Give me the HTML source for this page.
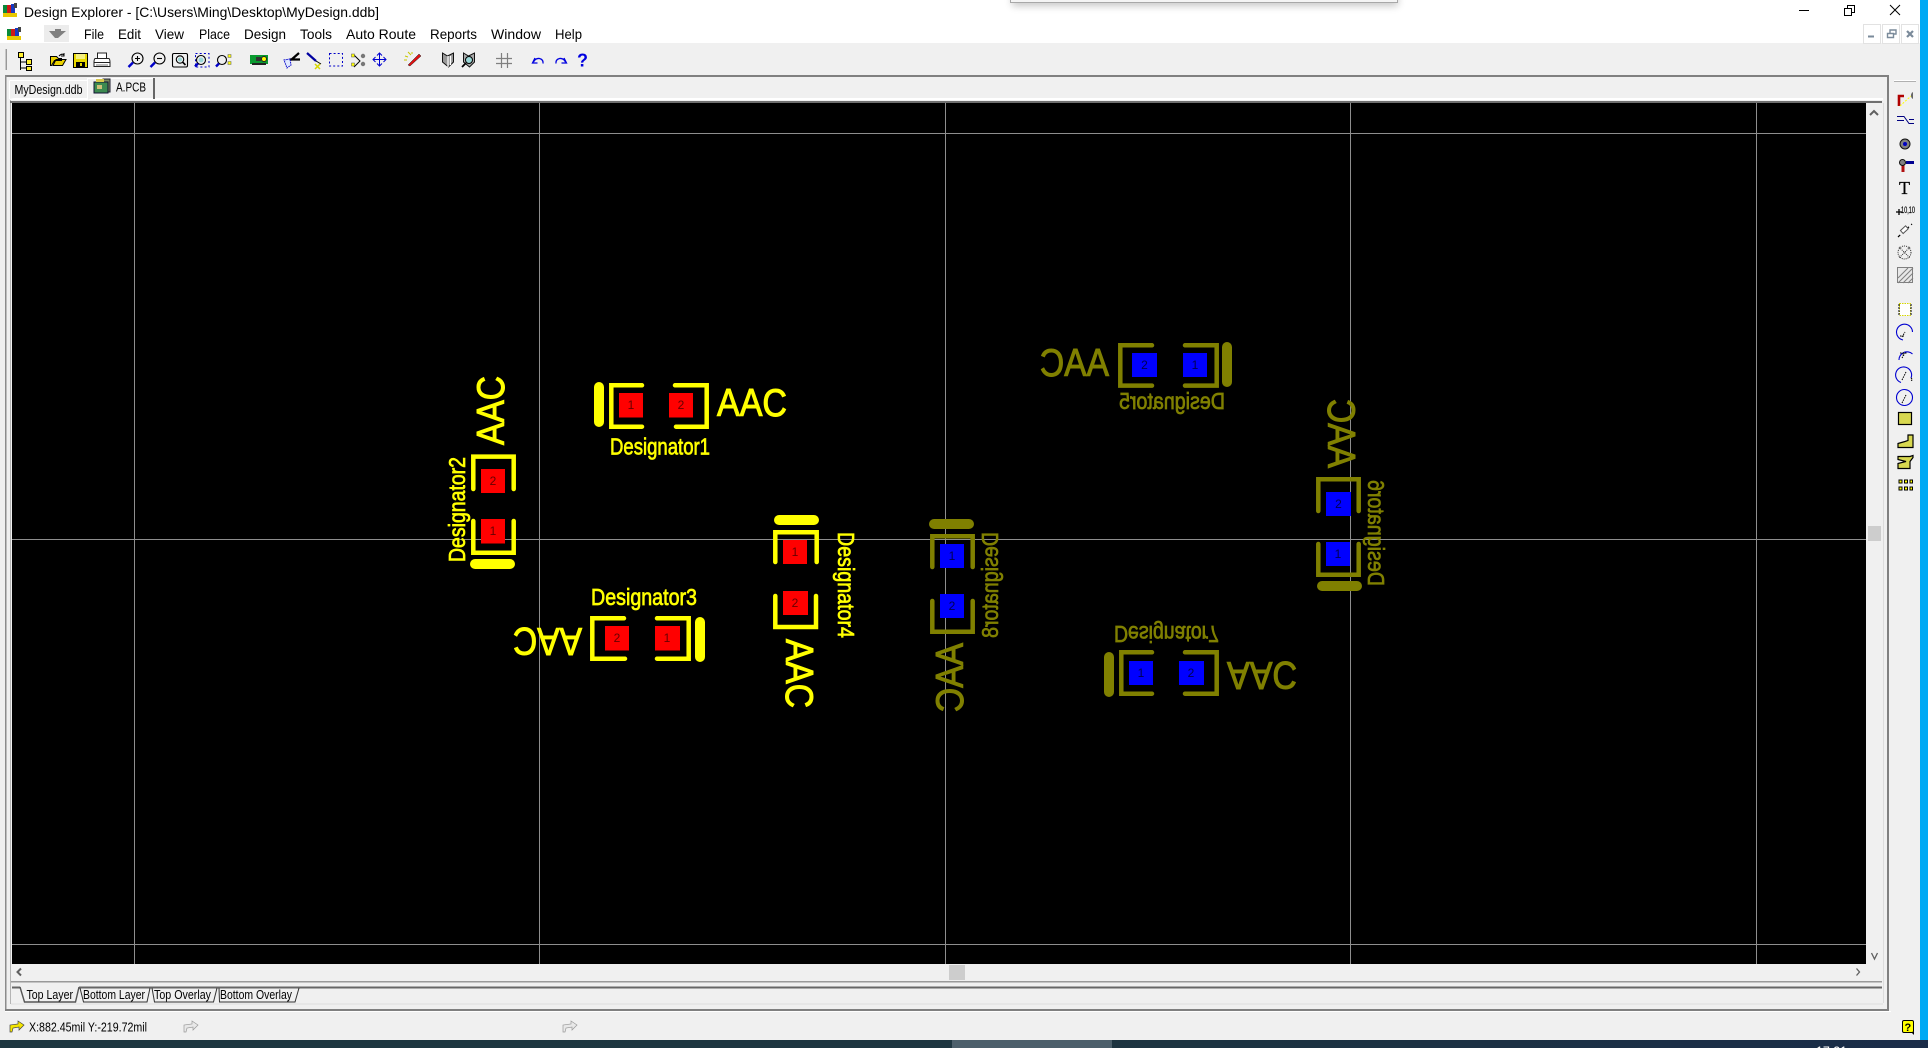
<!DOCTYPE html>
<html><head><meta charset="utf-8"><title>Design Explorer</title>
<style>
html,body{margin:0;padding:0;width:1928px;height:1048px;overflow:hidden;background:#f0f0f0}
svg{display:block;position:absolute;left:0;top:0}
text{font-family:"Liberation Sans",sans-serif}
.ui{font-size:14px;fill:#000}
.s{font-size:12.5px;fill:#000}
.ac{font-size:39px;stroke-width:1}
.de{font-size:23px;stroke-width:.7}
.y{fill:#ff0;stroke:#ff0}
.o{fill:#808000;stroke:#808000}
.p{font-size:12px;text-anchor:middle}
.by path{fill:none;stroke:#ff0;stroke-width:4.5;stroke-linecap:round;stroke-linejoin:miter}
.bo path{fill:none;stroke:#808000;stroke-width:4.5;stroke-linecap:round;stroke-linejoin:miter}
</style></head><body>
<svg width="1928" height="1048" viewBox="0 0 1928 1048">
<defs><filter id="sh" x="-5%" y="-50%" width="110%" height="300%"><feGaussianBlur stdDeviation="4"/></filter></defs>
<rect width="1928" height="1048" fill="#f0f0f0"/>
<!-- title + menu white -->
<rect width="1920" height="43" fill="#fff"/>
<rect x="1012" y="-20" width="386" height="26" fill="#000" opacity=".22" filter="url(#sh)"/>
<rect x="1010.5" y="-4" width="387" height="6.5" fill="#f4f4f4" stroke="#a8a8a8"/>
<!-- app icon -->
<g id="t"><rect x="3" y="5" width="4" height="11" fill="#0a8a3a"/><rect x="7" y="5" width="4" height="11" fill="#d01818"/><rect x="11" y="4" width="4" height="12" fill="#1838c0"/><rect x="3" y="13" width="14" height="4" fill="#e8c800"/><rect x="14" y="3" width="3" height="5" fill="#444"/></g>
<text class="ui" x="24" y="17" textLength="355" lengthAdjust="spacingAndGlyphs">Design Explorer - [C:\Users\Ming\Desktop\MyDesign.ddb]</text>
<!-- window controls -->
<path d="M1799 10.5H1809" stroke="#000" fill="none"/>
<path d="M1844.5 8.5h7v7h-7zM1847.5 8.5v-3h7v7h-3" stroke="#000" fill="none"/>
<path d="M1890 5l10 10M1900 5l-10 10" stroke="#000" fill="none"/>
<!-- menu -->
<g><rect x="7" y="29" width="4" height="9" fill="#0a8a3a"/><rect x="11" y="29" width="4" height="9" fill="#d01818"/><rect x="15" y="28" width="4" height="10" fill="#1838c0"/><rect x="7" y="36" width="14" height="4" fill="#e8c800"/><rect x="18" y="27" width="3" height="5" fill="#444"/></g>
<rect x="44" y="25" width="25" height="17" fill="#ececec"/>
<path d="M49 31h6v-2h6v2h5l-8 7h-3z" fill="#808080"/>
<g class="ui">
<text x="84" y="39" textLength="20" lengthAdjust="spacingAndGlyphs">File</text>
<text x="118" y="39" textLength="23" lengthAdjust="spacingAndGlyphs">Edit</text>
<text x="155" y="39" textLength="29" lengthAdjust="spacingAndGlyphs">View</text>
<text x="199" y="39" textLength="31" lengthAdjust="spacingAndGlyphs">Place</text>
<text x="244" y="39" textLength="42" lengthAdjust="spacingAndGlyphs">Design</text>
<text x="300" y="39" textLength="32" lengthAdjust="spacingAndGlyphs">Tools</text>
<text x="346" y="39" textLength="70" lengthAdjust="spacingAndGlyphs">Auto Route</text>
<text x="430" y="39" textLength="47" lengthAdjust="spacingAndGlyphs">Reports</text>
<text x="491" y="39" textLength="50" lengthAdjust="spacingAndGlyphs">Window</text>
<text x="555" y="39" textLength="27" lengthAdjust="spacingAndGlyphs">Help</text>
</g>
<!-- mdi buttons -->
<g fill="#fff" stroke="#e2e2e2"><rect x="1863.5" y="24.5" width="17" height="19"/><rect x="1882.5" y="24.5" width="17" height="19"/><rect x="1901.5" y="24.5" width="17" height="19"/></g>
<path d="M1868 36.5h6" stroke="#7a8a9a" stroke-width="2"/>
<path d="M1887.5 33.5h6v4h-6zM1890 33v-3h6v4h-2" stroke="#7a8a9a" fill="none" stroke-width="1.4"/>
<path d="M1907 31l6 6M1913 31l-6 6" stroke="#7a8a9a" stroke-width="2.2"/>
<!-- blue strip -->
<rect x="1920" width="8" height="1040" fill="#00a9f4"/>
<!-- toolbar icons -->
<path d="M5.500 49v21" stroke="#c8c8c8"/><path d="M6.500 49v21" stroke="#999"/>
<path d="M20.500 56v14M20.500 62H27M20.500 68H27" stroke="#000" fill="none"/>
<g fill="#ffef30" stroke="#000"><rect x="18.500" y="52.500" width="5" height="5"/><rect x="26.500" y="59.500" width="5" height="5"/><rect x="26.500" y="66.500" width="5" height="4"/></g>
<path d="M50.500 65.500V56.500h6l2 2h3v2h-7l-3 5zM53 65.500l3-6h10l-3.500 6z" fill="#e8d000" stroke="#000"/><path d="M59 56q3-3 5-1M64 53v3h-3" stroke="#000" fill="none"/>
<rect x="73.500" y="53.500" width="14" height="14" fill="#e8d800" stroke="#000"/><rect x="76" y="54" width="9" height="5" fill="#f4ef80"/><rect x="76" y="62" width="9" height="5.500" fill="#000"/><rect x="80" y="63" width="2" height="3" fill="#e8d800"/>
<path d="M97.500 58v-5h9v5M95 58.500q-1 1-1 4v4h16v-4q0-3-1-4zM94.500 62.500h15" fill="#fff" stroke="#222"/><path d="M96 65h12" stroke="#777"/>
<!-- zooms -->
<g fill="none" stroke="#000" stroke-width="1.1"><circle cx="137.500" cy="58.500" r="5.500"/><path d="M135 58.500h5M137.500 56v5"/><circle cx="159.500" cy="58.500" r="5.500"/><path d="M157 58.500h5"/><rect x="172.500" y="53.500" width="15" height="13.500" rx="1.500"/><circle cx="180" cy="59.500" r="3.700"/><circle cx="201" cy="60" r="4.500"/><circle cx="222" cy="60" r="4.500"/></g>
<path d="M133 62.500l-4.500 4.500M155 62.500l-4.500 4.500M198 63.500l-3 3M219 63.500l-3 3" stroke="#0000c8" stroke-width="2.400"/>
<path d="M182.500 62l3 3" stroke="#000" stroke-width="1.600"/>
<rect x="195.500" y="53.500" width="13.500" height="13.500" fill="none" stroke="#0000c8" stroke-dasharray="2 2.200"/>
<circle cx="201" cy="60" r="2.500" fill="#9cd8d8"/><circle cx="180" cy="59.500" r="2" fill="#9cd8d8"/>
<path d="M228 54.500h3v3h-3zM228 61.500h3v3h-3z" fill="#ff0" stroke="#666" stroke-width=".6"/>
<!-- pcb icon -->
<rect x="250" y="55" width="18" height="9" fill="#0a9a30"/><rect x="256" y="57" width="5" height="4" fill="#333"/><circle cx="264" cy="59" r="2.500" fill="#ff0" stroke="#222"/><rect x="252" y="63" width="14" height="2" fill="#222"/>
<!-- scissors etc -->
<path d="M291 60L299 53M290 59.500H300" stroke="#000" stroke-width="2.200" fill="none"/>
<path d="M284 60l6-1 1 6-4 3z" fill="#dfe8ff" stroke="#0000c8" stroke-dasharray="1.500 .8"/>
<path d="M307 53l9 8" stroke="#0000a0" stroke-width="2.200"/><path d="M316 61l5 3" stroke="#000"/><path d="M315 64l5 5M320 64l-5 5" stroke="#d8d800" stroke-width="1.500"/>
<rect x="329.500" y="53.500" width="13" height="12.500" fill="none" stroke="#0000c8" stroke-dasharray="2 2.100"/>
<path d="M354 55l6 6-6 6" stroke="#000" fill="none"/><circle cx="363" cy="56" r="2.200" fill="#777"/><circle cx="363" cy="64" r="2.200" fill="#777"/><rect x="351.500" y="54" width="3" height="3" fill="#ff0" stroke="#555" stroke-width=".5"/><rect x="351.500" y="63" width="3" height="3" fill="#ff0" stroke="#555" stroke-width=".5"/>
<path d="M379.500 53v13M373 59.500h13M377 55.500l2.500-2.500 2.500 2.500M377 63.500l2.500 2.500 2.500-2.500M375.500 57l-2.500 2.500 2.500 2.500M383.500 57l2.500 2.500-2.500 2.500" stroke="#0000d0" fill="none" stroke-width="1"/>
<path d="M408 65l11-11 2 2-11 10z" fill="#e01010" stroke="#222" stroke-width=".5"/><path d="M408 52l3 3M412 52v2M405 56l3 1M404 60h3" stroke="#c8c800"/>
<!-- books -->
<path d="M442.500 53l5 3 6-3v9l-5 5-6-5z" fill="#999" stroke="#111"/><path d="M448 56v11M450.500 56v9" stroke="#fff" stroke-width="1.200"/>
<path d="M463.500 53l5 3 6-3v9l-5 5-6-5z" fill="#aaa" stroke="#111"/><circle cx="469" cy="60" r="3.500" fill="#9cd8d8" stroke="#000"/><path d="M466 63l-4 4" stroke="#000" stroke-width="1.800"/>
<!-- grid -->
<path d="M501.500 53v15M507.500 53v15M496 58.500h16M496 63.500h16" stroke="#808080" stroke-width="1.200" fill="none"/>
<!-- undo redo -->
<path d="M535 58l-2.500 5h5M533.500 62q2-4 6-3.500 4 1 3.500 5" stroke="#0000e0" stroke-width="1.300" fill="none"/>
<path d="M564 58l2.500 5h-5M565.500 62q-2-4-6-3.500-4 1-3.500 5" stroke="#0000e0" stroke-width="1.300" fill="none"/>
<text x="577" y="66.500" font-size="18" font-weight="700" fill="#0000e0">?</text>

<!-- frame -->
<rect x="5" y="75" width="1883" height="2" fill="#808080"/>
<rect x="5" y="75" width="1.500" height="936" fill="#8c8c8c"/>
<rect x="10" y="100" width="1" height="904" fill="#b4b4b4"/>
<rect x="1887" y="75" width="2" height="936" fill="#808080"/>
<rect x="5" y="1009" width="1884" height="2" fill="#808080"/>
<rect x="5" y="1011" width="1886" height="1" fill="#fff"/>
<rect x="1883" y="103" width="1" height="900" fill="#dcdcdc"/>
<rect x="10" y="98" width="1873" height="2" fill="#fff"/>
<rect x="10" y="101" width="1872" height="2" fill="#707070"/>
<!-- doc tabs -->
<path d="M9.500 99V81.500q0-1 1-1H87" fill="#f0f0f0" stroke="#fff"/>
<text class="s" x="14.500" y="94" style="font-size:13px" textLength="68" lengthAdjust="spacingAndGlyphs">MyDesign.ddb</text>
<path d="M87.500 100V78.500H153" fill="#f0f0f0" stroke="#fff"/>
<rect x="153" y="78" width="2" height="21" fill="#666"/>
<path d="M103 79h7v13h-7z" fill="#7d8b60" stroke="#223"/><rect x="94" y="82" width="14" height="11" fill="#3c8a50" stroke="#113"/><rect x="97" y="85" width="5" height="4" fill="#cfc27a"/><rect x="96" y="79" width="8" height="3" fill="#d8c84c"/>
<text class="s" x="116" y="91.500" style="font-size:13px" textLength="30" lengthAdjust="spacingAndGlyphs">A.PCB</text>

<!-- canvas -->
<rect x="12" y="103" width="1854" height="861" fill="#000"/>
<g stroke="#8e8e8e" stroke-width="1" fill="none">
<path d="M134.500 103V964M539.500 103V964M945.500 103V964M1350.500 103V964M1756.500 103V964"/>
<path d="M12 133.500H1866M12 539.500H1866M12 944.500H1866"/>
</g>

<!-- Comp 1 -->
<g class="by"><path d="M642 385.300H611.300V426.700H642"/><path d="M675 385.300H706.700V426.700H676"/></g>
<rect x="594" y="382" width="10" height="45" rx="5" fill="#ff0"/>
<rect x="619" y="393" width="24" height="24.500" fill="#f00"/><rect x="669" y="393" width="24" height="24.500" fill="#f00"/>
<text class="p" x="631" y="409" fill="#600">1</text><text class="p" x="681" y="409" fill="#600">2</text>
<text class="ac y" transform="translate(717,416)" textLength="70" lengthAdjust="spacingAndGlyphs">AAC</text>
<text class="de y" transform="translate(610,454.500)" textLength="100" lengthAdjust="spacingAndGlyphs">Designator1</text>

<!-- Comp 2 -->
<g class="by"><path d="M473.300 489V456.600H513.700V489"/><path d="M473.300 521V552.800H513.700V521"/></g>
<rect x="470" y="559" width="45" height="10" rx="5" fill="#ff0"/>
<rect x="481" y="469" width="24" height="24" fill="#f00"/><rect x="481" y="519" width="24" height="24.500" fill="#f00"/>
<text class="p" x="493" y="485" fill="#600">2</text><text class="p" x="493" y="535" fill="#600">1</text>
<text class="ac y" transform="translate(504,445) rotate(-90)" textLength="69" lengthAdjust="spacingAndGlyphs">AAC</text>
<text class="de y" transform="translate(465,562) rotate(-90)" textLength="105" lengthAdjust="spacingAndGlyphs">Designator2</text>

<!-- Comp 3 -->
<g class="by"><path d="M624 618.300H592.300V658.700H625"/><path d="M657 618.300H688.700V658.700H657"/></g>
<rect x="695" y="617" width="10" height="45" rx="5" fill="#ff0"/>
<rect x="605" y="626" width="24" height="24.500" fill="#f00"/><rect x="655" y="626" width="25" height="24.500" fill="#f00"/>
<text class="p" x="617" y="642" fill="#600">2</text><text class="p" x="667" y="642" fill="#600">1</text>
<text class="ac y" transform="translate(582,628) rotate(180)" textLength="69" lengthAdjust="spacingAndGlyphs">AAC</text>
<text class="de y" transform="translate(591,605)" textLength="106" lengthAdjust="spacingAndGlyphs">Designator3</text>

<!-- Comp 4 -->
<g class="by"><path d="M775.300 562V532.300H816.700V562"/><path d="M775.300 596V627H816V596"/></g>
<rect x="774" y="515" width="45" height="10" rx="5" fill="#ff0"/>
<rect x="783" y="540" width="24" height="24" fill="#f00"/><rect x="783" y="591" width="25" height="24" fill="#f00"/>
<text class="p" x="795" y="556" fill="#600">1</text><text class="p" x="795" y="607" fill="#600">2</text>
<text class="ac y" transform="translate(786,639) rotate(90)" textLength="69" lengthAdjust="spacingAndGlyphs">AAC</text>
<text class="de y" transform="translate(838,532) rotate(90)" textLength="106" lengthAdjust="spacingAndGlyphs">Designator4</text>

<!-- Comp 5 -->
<g class="bo"><path d="M1152 345.300H1120.300V385.600H1152"/><path d="M1185 345.300H1216.700V385.600H1185"/></g>
<rect x="1222" y="342" width="10" height="45" rx="5" fill="#808000"/>
<rect x="1132" y="353" width="25" height="24" fill="#00f"/><rect x="1183" y="353" width="24" height="24" fill="#00f"/>
<text class="p" x="1144.500" y="369" fill="#000050">2</text><text class="p" x="1195" y="369" fill="#000050">1</text>
<text class="ac o" transform="translate(1109,376) scale(-1,1)" textLength="69" lengthAdjust="spacingAndGlyphs">AAC</text>
<text class="de o" transform="translate(1225,409) scale(-1,1)" textLength="106" lengthAdjust="spacingAndGlyphs">Designator5</text>

<!-- Comp 6 -->
<g class="bo"><path d="M1318.300 511V479.300H1358.700V511"/><path d="M1318.300 544V574.700H1358.700V544"/></g>
<rect x="1317" y="581" width="45" height="10" rx="5" fill="#808000"/>
<rect x="1326" y="492" width="25" height="24" fill="#00f"/><rect x="1326" y="542" width="24" height="24" fill="#00f"/>
<text class="p" x="1338.500" y="508" fill="#000050">2</text><text class="p" x="1338" y="558" fill="#000050">1</text>
<text class="ac o" transform="matrix(0,-1,-1,0,1328,468)" textLength="69" lengthAdjust="spacingAndGlyphs">AAC</text>
<text class="de o" transform="matrix(0,-1,-1,0,1368,586)" textLength="106" lengthAdjust="spacingAndGlyphs">Designator6</text>

<!-- Comp 7 -->
<g class="bo"><path d="M1152 652.300H1121.300V693.700H1152"/><path d="M1185 652.300H1216.700V693.700H1185"/></g>
<rect x="1104" y="652" width="10" height="45" rx="5" fill="#808000"/>
<rect x="1129" y="661" width="24" height="24" fill="#00f"/><rect x="1179" y="661" width="25" height="24" fill="#00f"/>
<text class="p" x="1141" y="677" fill="#000050">1</text><text class="p" x="1191" y="677" fill="#000050">2</text>
<text class="ac o" transform="translate(1227,662) scale(1,-1)" textLength="70" lengthAdjust="spacingAndGlyphs">AAC</text>
<text class="de o" transform="translate(1114,626) scale(1,-1)" textLength="105" lengthAdjust="spacingAndGlyphs">Designator7</text>

<!-- Comp 8 -->
<g class="bo"><path d="M932.300 567V536.300H972.700V567"/><path d="M932.300 601V631.700H972.700V601"/></g>
<rect x="929" y="519" width="45" height="10" rx="5" fill="#808000"/>
<rect x="940" y="544" width="24" height="24" fill="#00f"/><rect x="940" y="594" width="24" height="24" fill="#00f"/>
<text class="p" x="952" y="560" fill="#000050">1</text><text class="p" x="952" y="610" fill="#000050">2</text>
<text class="ac o" transform="matrix(0,1,1,0,963,643)" textLength="69" lengthAdjust="spacingAndGlyphs">AAC</text>
<text class="de o" transform="matrix(0,1,1,0,998,532)" textLength="106" lengthAdjust="spacingAndGlyphs">Designator8</text>

<!-- scrollbars -->
<path d="M1870 115l4-4 4 4" stroke="#606060" stroke-width="2" fill="none"/>
<path d="M1871.500 953l3 6 3-6" stroke="#606060" stroke-width="1.300" fill="none"/>
<rect x="1868" y="526" width="13" height="15" fill="#cdcdcd"/>
<rect x="949" y="965" width="16" height="15" fill="#cdcdcd"/>
<path d="M21 968.500l-3.500 3.500 3.500 3.500" stroke="#606060" stroke-width="2" fill="none"/>
<path d="M1856.500 968.500l3 3.500-3 3.500" stroke="#606060" stroke-width="1.300" fill="none"/>

<!-- layer tabs -->
<rect x="11" y="981" width="1871" height="1.500" fill="#999"/>
<path d="M12 987.500H20M79 987.500H1882" stroke="#666" stroke-width="2" fill="none"/>
<rect x="11" y="1003.500" width="1872" height="1" fill="#dedede"/>
<path d="M20 987l4.500 15H75.500L79 987" stroke="#555" stroke-width="1.400" fill="none"/>
<path d="M80 988l3.500 14H147l3-14M152 988l2.500 14H213.500l3.500-14M219 988l.5 14H295l4-14" stroke="#333" fill="none"/>
<g class="s">
<text x="26.500" y="999" textLength="46.500" lengthAdjust="spacingAndGlyphs">Top Layer</text>
<text x="83" y="999" textLength="62" lengthAdjust="spacingAndGlyphs">Bottom Layer</text>
<text x="154" y="999" textLength="57" lengthAdjust="spacingAndGlyphs">Top Overlay</text>
<text x="220" y="999" textLength="72" lengthAdjust="spacingAndGlyphs">Bottom Overlay</text>
</g>

<!-- status -->
<path d="M10 1032v-7l8-1v-3l6 4-5 5v-3l-6 1-1 4z" fill="#f4e600" stroke="#444" stroke-width=".7"/>
<text class="s" x="29" y="1031.500" textLength="118" lengthAdjust="spacingAndGlyphs">X:882.45mil Y:-219.72mil</text>
<path d="M184 1032v-7l8-1v-3l6 4-5 5v-3l-6 1-1 4z" fill="#e8e8e8" stroke="#999" stroke-width=".7"/>
<path d="M563 1032v-7l8-1v-3l6 4-5 5v-3l-6 1-1 4z" fill="#e8e8e8" stroke="#999" stroke-width=".7"/>
<rect x="1902.500" y="1020.500" width="11" height="12" rx="1.500" fill="#ff0" stroke="#000"/>
<path d="M1911 1032l3 3v-3z" fill="#000"/>
<text x="1904.500" y="1031" font-size="11" font-weight="700" fill="#000">?</text>

<!-- right toolbar -->
<rect x="1894" y="80" width="22" height="1" fill="#fff"/><rect x="1894" y="81" width="22" height="1" fill="#b0b0b0"/>
<path d="M1899 106V96h5" stroke="#b00000" stroke-width="2.600" fill="none"/>
<path d="M1900 106l11-10" stroke="#ff0" stroke-dasharray="2 1.500"/>
<path d="M1913 92a4 4 0 0 0 0 7z" fill="#666"/>
<path d="M1897 116.500h7l5 7h5M1897 120.500h7M1909 119.500h5" stroke="#000080" fill="none"/>
<circle cx="1905" cy="144" r="5" fill="#808080" stroke="#111"/><circle cx="1905" cy="144" r="2" fill="#0000c0"/>
<rect x="1906" y="161" width="8" height="3" fill="#000090"/><rect x="1901.500" y="165" width="3" height="7" fill="#b01010"/><circle cx="1902.500" cy="162.500" r="3" fill="#808080" stroke="#111"/>
<text x="1899" y="194" font-size="18" fill="#000" style="font-family:'Liberation Serif',serif;stroke:#000;stroke-width:.3">T</text>
<text x="1901" y="213" font-size="9" fill="#000" stroke="#000" stroke-width=".2" textLength="14" lengthAdjust="spacingAndGlyphs">10,10</text>
<path d="M1896 212h6M1899 209v6" stroke="#000" stroke-width="1.300"/>
<path d="M1898 237l14-13" stroke="#000" stroke-dasharray="3 3" stroke-width="1.200"/><rect x="1901" y="228" width="7" height="4" transform="rotate(-43 1904 230)" fill="#fff" stroke="#555"/>
<g stroke="#333" fill="none" stroke-dasharray="1 1"><circle cx="1904.500" cy="252.500" r="6.500"/><path d="M1899 247l11 11M1910 247l-11 11"/></g>
<rect x="1897.500" y="267.500" width="15" height="15" fill="#e8e8e8" stroke="#808080"/>
<path d="M1898 278l10-10M1898 283l15-15M1903 283l10-10M1908 283l5-5" stroke="#808080" fill="none"/>
<rect x="1899.500" y="303.500" width="11" height="12" fill="#fff" stroke="#d8d800" stroke-dasharray="1.500 1"/>
<path d="M1898 305h2M1898 308h2M1898 311h2M1898 314h2M1910 305h2M1910 308h2M1910 311h2M1910 314h2" stroke="#000"/>
<g fill="none" stroke="#0000d0" stroke-width="1.100">
<path d="M1903 340A8 8 0 1 1 1912.500 332"/><path d="M1899 360A8 8 0 0 1 1912.500 354"/><path d="M1901 382.500A8 8 0 1 1 1911 378"/><circle cx="1904.500" cy="397.500" r="8"/>
</g>
<path d="M1902 337l3-5M1900 336h5M1902 358l3-5M1900 353h7M1903 353v3M1902 380l4-8M1911 378l1.500 1.500-1.500 1.500M1902 403l4-8" stroke="#000" stroke-dasharray="1.500 1" fill="none"/>
<g fill="#d8d850" stroke="#000" stroke-width="1.200">
<rect x="1898.500" y="412.500" width="13" height="12"/>
<path d="M1898 447.500v-4l7-2 3-1v-5.500h5v12.500z"/>
<path d="M1898 456.500h12l3-1v2l-3 4v7h-12v-5l8-2-8-2z"/>
</g>
<g fill="none" stroke="#000" stroke-width="1">
<path d="M1899 480h3v3h-3zM1904.500 480h3v3h-3zM1910 480h2.500v3h-2.500zM1899 487h3v3h-3zM1904.500 487h3v3h-3zM1910 487h2.500v3h-2.500z" fill="#ff0"/>
</g>

<!-- taskbar -->
<defs><linearGradient id="tb" x1="0" x2="1"><stop offset="0" stop-color="#1d3640"/><stop offset=".55" stop-color="#1d3540"/><stop offset="1" stop-color="#1a2c48"/></linearGradient></defs>
<rect y="1040" width="1928" height="8" fill="url(#tb)"/>
<rect x="952" y="1040" width="160" height="8" fill="#4c5f6b"/>
<text x="1816" y="1056" font-size="14" fill="#fff" textLength="31" lengthAdjust="spacingAndGlyphs">17:21</text>
</svg>
</body></html>
